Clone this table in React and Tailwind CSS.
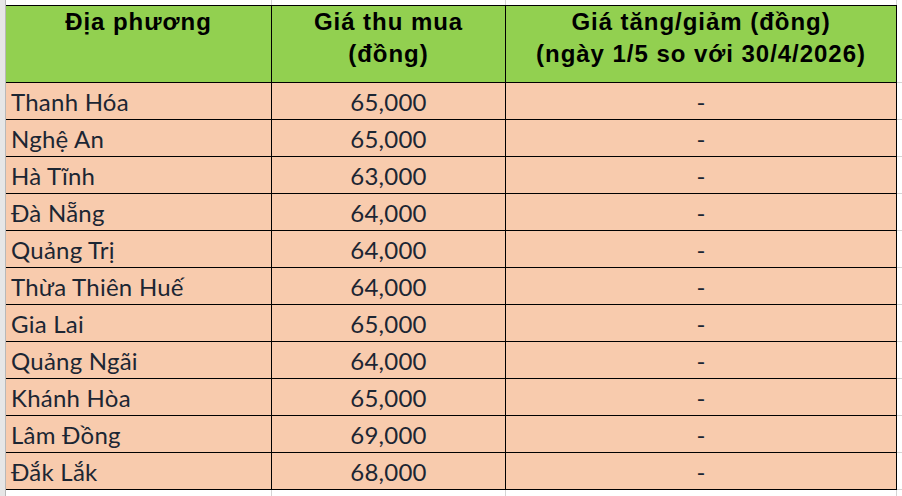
import React from 'react';

const rows = [
  ['Thanh Hóa', '65,000'],
  ['Nghệ An', '65,000'],
  ['Hà Tĩnh', '63,000'],
  ['Đà Nẵng', '64,000'],
  ['Quảng Trị', '64,000'],
  ['Thừa Thiên Huế', '64,000'],
  ['Gia Lai', '65,000'],
  ['Quảng Ngãi', '64,000'],
  ['Khánh Hòa', '65,000'],
  ['Lâm Đồng', '69,000'],
  ['Đắk Lắk', '68,000'],
];

const head = "font-['Liberation_Sans',Arial,sans-serif] font-bold text-[24px] leading-[32px] tracking-[0.04em] text-black text-center";
const cell = "font-['Lato','Open_Sans',sans-serif] text-[24px] leading-[36px] tracking-[0.01em] text-[#1c2633]";

export default function App() {
  return (
    <div className="w-[902px] h-[496px] bg-white flex overflow-hidden">
      <div className="w-[6px] shrink-0 bg-[#e6e6e6] border-r border-[#b8b8b8]" />
      <div className="flex flex-col">
        <div className="flex h-[7px]">
          <div className="w-[266px] border-r border-[#d4d4d4]" />
          <div className="w-[234px] border-r border-[#d4d4d4]" />
          <div className="w-[391px] border-r border-[#d4d4d4]" />
        </div>
        <div className="flex">
          <div className="flex border-t border-b border-black bg-[#92d050] h-[78px]">
            <div className={`w-[266px] border-r border-black ${head}`}>Địa phương</div>
            <div className={`w-[234px] border-r border-black ${head}`}>
              Giá thu mua
              <br />
              (đồng)
            </div>
            <div className={`w-[391px] border-r border-black ${head}`}>
              Giá tăng/giảm (đồng)
              <br />
              (ngày 1/5 so với 30/4/2026)
            </div>
          </div>
          <div className="w-[5px] h-[78px] border-b border-[#d4d4d4]" />
        </div>
        {rows.map(([name, price]) => (
          <div key={name} className="flex">
            <div className="flex h-[37px] border-b border-black bg-[#f8cbad]">
              <div className={`w-[266px] border-r border-black pl-[5px] pt-[1px] ${cell}`}>{name}</div>
              <div className={`w-[234px] border-r border-black text-center pt-[1px] ${cell}`}>{price}</div>
              <div className={`w-[391px] border-r border-black text-center pt-[1px] ${cell}`}>-</div>
            </div>
            <div className="w-[5px] h-[37px] border-b border-[#d4d4d4]" />
          </div>
        ))}
        <div className="flex h-[10px]">
          <div className="w-[266px] border-r border-[#d4d4d4]" />
          <div className="w-[234px] border-r border-[#d4d4d4]" />
          <div className="w-[391px] border-r border-[#d4d4d4]" />
        </div>
      </div>
    </div>
  );
}
